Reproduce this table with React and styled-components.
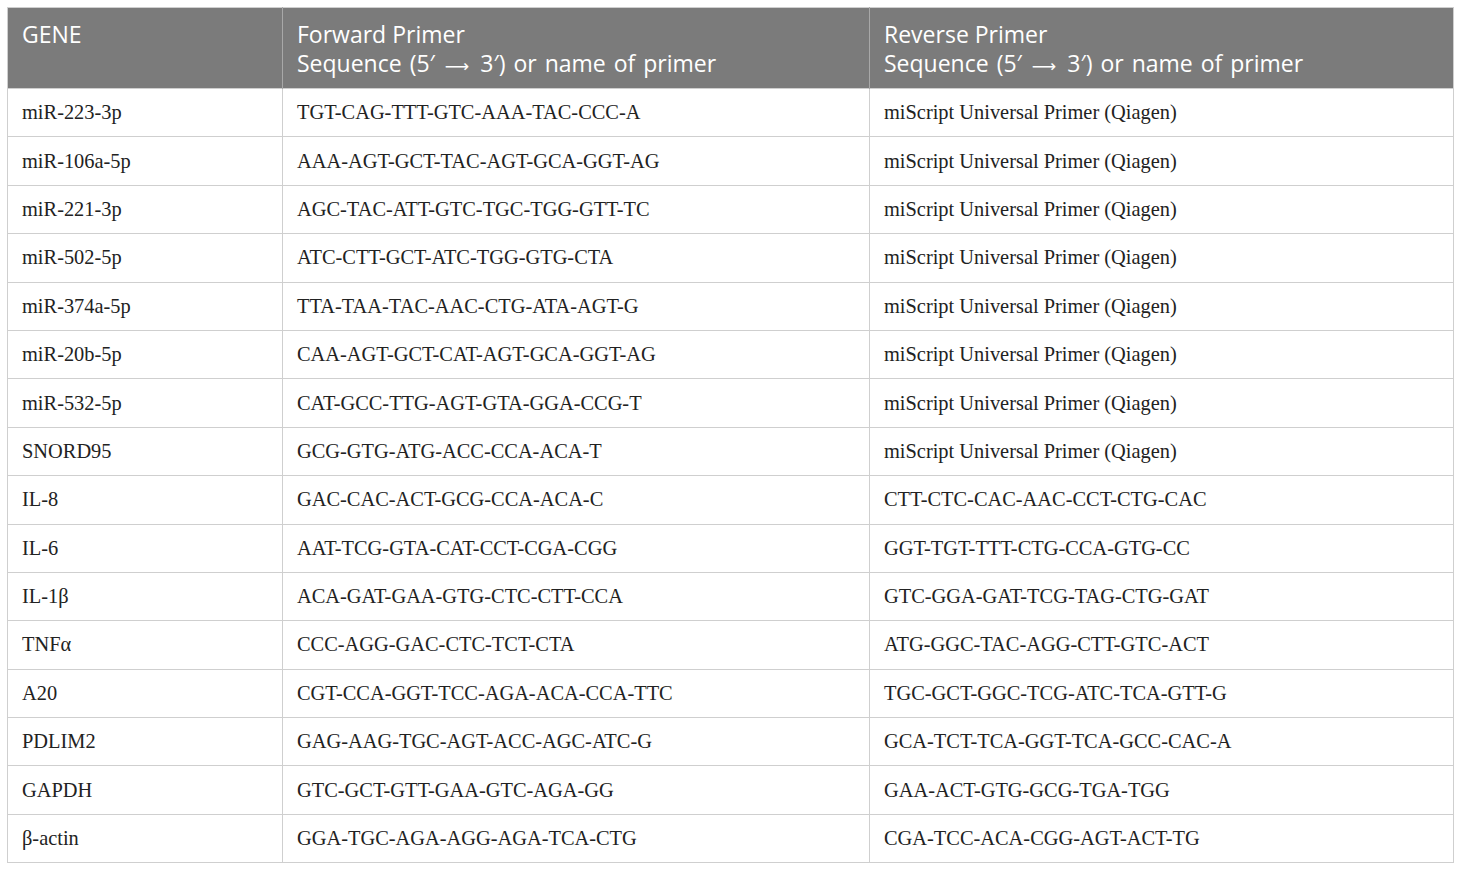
import React from 'react';
import styled, { createGlobalStyle } from 'styled-components';

const ROWS = [
  ['miR-223-3p', 'TGT-CAG-TTT-GTC-AAA-TAC-CCC-A', 'miScript Universal Primer (Qiagen)'],
  ['miR-106a-5p', 'AAA-AGT-GCT-TAC-AGT-GCA-GGT-AG', 'miScript Universal Primer (Qiagen)'],
  ['miR-221-3p', 'AGC-TAC-ATT-GTC-TGC-TGG-GTT-TC', 'miScript Universal Primer (Qiagen)'],
  ['miR-502-5p', 'ATC-CTT-GCT-ATC-TGG-GTG-CTA', 'miScript Universal Primer (Qiagen)'],
  ['miR-374a-5p', 'TTA-TAA-TAC-AAC-CTG-ATA-AGT-G', 'miScript Universal Primer (Qiagen)'],
  ['miR-20b-5p', 'CAA-AGT-GCT-CAT-AGT-GCA-GGT-AG', 'miScript Universal Primer (Qiagen)'],
  ['miR-532-5p', 'CAT-GCC-TTG-AGT-GTA-GGA-CCG-T', 'miScript Universal Primer (Qiagen)'],
  ['SNORD95', 'GCG-GTG-ATG-ACC-CCA-ACA-T', 'miScript Universal Primer (Qiagen)'],
  ['IL-8', 'GAC-CAC-ACT-GCG-CCA-ACA-C', 'CTT-CTC-CAC-AAC-CCT-CTG-CAC'],
  ['IL-6', 'AAT-TCG-GTA-CAT-CCT-CGA-CGG', 'GGT-TGT-TTT-CTG-CCA-GTG-CC'],
  ['IL-1β', 'ACA-GAT-GAA-GTG-CTC-CTT-CCA', 'GTC-GGA-GAT-TCG-TAG-CTG-GAT'],
  ['TNFα', 'CCC-AGG-GAC-CTC-TCT-CTA', 'ATG-GGC-TAC-AGG-CTT-GTC-ACT'],
  ['A20', 'CGT-CCA-GGT-TCC-AGA-ACA-CCA-TTC', 'TGC-GCT-GGC-TCG-ATC-TCA-GTT-G'],
  ['PDLIM2', 'GAG-AAG-TGC-AGT-ACC-AGC-ATC-G', 'GCA-TCT-TCA-GGT-TCA-GCC-CAC-A'],
  ['GAPDH', 'GTC-GCT-GTT-GAA-GTC-AGA-GG', 'GAA-ACT-GTG-GCG-TGA-TGG'],
  ['β-actin', 'GGA-TGC-AGA-AGG-AGA-TCA-CTG', 'CGA-TCC-ACA-CGG-AGT-ACT-TG'],
];

function SequenceLabel() {
  return (
    <SeqLine>
      Sequence (5′<Arrow>⟶</Arrow>3′) or name of primer
    </SeqLine>
  );
}

function App() {
  return (
    <>
      <GlobalStyle />
      <Page>
        <Table>
          <colgroup>
            <col style={{ width: 275 }} />
            <col style={{ width: 587 }} />
            <col style={{ width: 584 }} />
          </colgroup>
          <thead>
            <tr>
              <HeadCell>GENE</HeadCell>
              <HeadCell>
                Forward Primer
                <br />
                <SequenceLabel />
              </HeadCell>
              <HeadCell>
                Reverse Primer
                <br />
                <SequenceLabel />
              </HeadCell>
            </tr>
          </thead>
          <tbody>
            {ROWS.map(row => (
              <tr key={row[0]}>
                {row.map((text, i) => (
                  <Cell key={i}>{text}</Cell>
                ))}
              </tr>
            ))}
          </tbody>
        </Table>
      </Page>
    </>
  );
}

// --- Стили ---
const GlobalStyle = createGlobalStyle`
  body {
    margin: 0;
    background: #fff;
  }
`;

const Page = styled.div`
  padding: 7px 7px 0 7px;
`;

const Table = styled.table`
  width: 1446px;
  border-collapse: collapse;
  table-layout: fixed;
  border: 1px solid #cfcfcf;
`;

const HeadCell = styled.th`
  background: #7b7b7b;
  color: #fff;
  font-family: "Open Sans", "Noto Sans", sans-serif;
  font-weight: 400;
  font-size: 23px;
  line-height: 29px;
  text-align: left;
  vertical-align: top;
  height: 81px;
  box-sizing: border-box;
  padding: 12px 14px 0 14px;
  border-left: 1px solid #a8a8a8;

  &:first-child {
    border-left: none;
  }
`;

const SeqLine = styled.span`
  word-spacing: 2px;
`;

const Arrow = styled.span`
  font-family: "DejaVu Sans", sans-serif;
  font-size: 17px;
  margin: 0 11px 0 10px;
`;

const Cell = styled.td`
  font-family: "Liberation Serif", "DejaVu Serif", serif;
  font-size: 20.4px;
  color: #222;
  height: 48.4px;
  box-sizing: border-box;
  padding: 0 14px;
  border: 1px solid #cfcfcf;
  vertical-align: middle;
`;

export default App;
